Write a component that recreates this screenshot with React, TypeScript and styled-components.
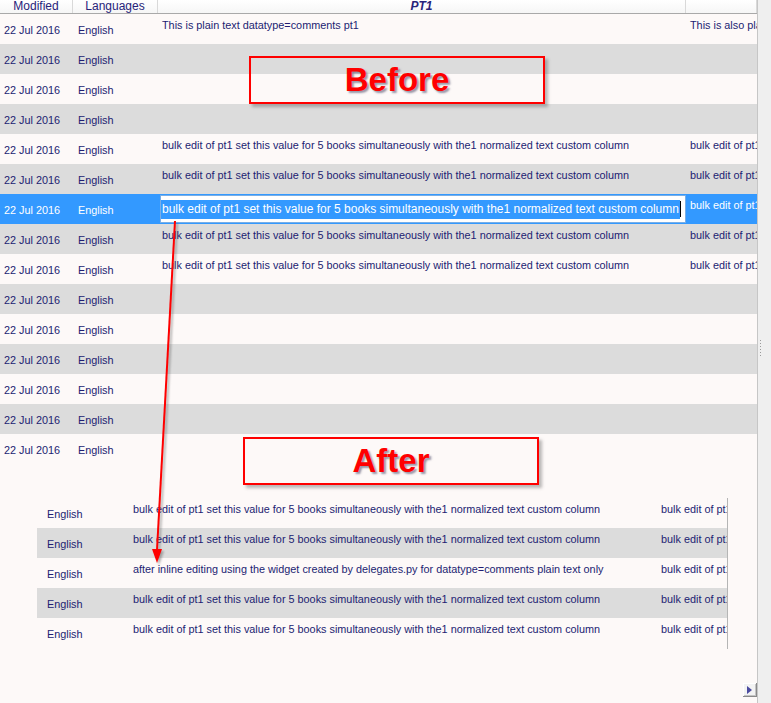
import React from 'react';
import styled, { createGlobalStyle } from 'styled-components';

const BULK = 'bulk edit of pt1 set this value for 5 books simultaneously with the1 normalized text custom column';
const EDITED = 'bulk edit of pt1 set this value for 5 books simultaneously with the1  normalized text custom column';
const NEXT = 'bulk edit of pt1 set this value for 5 books simultaneously';

interface Row {
  pt1?: string;
  next?: string;
  selected?: boolean;
}

const topRows: Row[] = [
  { pt1: 'This is plain text datatype=comments pt1', next: 'This is also plain text' },
  {}, {}, {},
  { pt1: BULK, next: NEXT },
  { pt1: BULK, next: NEXT },
  { pt1: EDITED, next: NEXT, selected: true },
  { pt1: BULK, next: NEXT },
  { pt1: BULK, next: NEXT },
  {}, {}, {}, {}, {}, {},
];

const bottomRows: string[] = [
  BULK,
  BULK,
  'after inline editing using the widget created by delegates.py for datatype=comments plain text only',
  BULK,
  BULK,
];

const GlobalStyle = createGlobalStyle`
  html, body {
    margin: 0;
    padding: 0;
    background: #fdf9f8;
    overflow: hidden;
  }
  * { box-sizing: border-box; }
`;

const App = () => (
  <>
    <GlobalStyle/>
    <Page>
      <Main>
        <Header>
          <HeadCell>Modified</HeadCell>
          <HeadCell>Languages</HeadCell>
          <HeadCell strong>PT1</HeadCell>
          <HeadCell/>
        </Header>
        {
          topRows.map((row, index) => (
            <TopRow key={ `top-${ index }` } shade={ index % 2 === 1 } selected={ !!row.selected }>
              <DateCell>22 Jul 2016</DateCell>
              <DateCell>English</DateCell>
              {
                row.selected
                  ? <EditCell><Editor><Selection>{ row.pt1 }</Selection><Caret/></Editor></EditCell>
                  : <TextCell>{ row.pt1 }</TextCell>
              }
              <TextCell>{ row.next }</TextCell>
            </TopRow>
          ))
        }
        <Lower>
          {
            bottomRows.map((text, index) => (
              <LowerRow key={ `low-${ index }` } shade={ index % 2 === 1 }>
                <LangCell>English</LangCell>
                <TextCell>{ text }</TextCell>
                <TextCell>{ NEXT }</TextCell>
              </LowerRow>
            ))
          }
        </Lower>

        <Label top={ 56 } left={ 249 }>Before</Label>
        <Label top={ 437 } left={ 243 }>After</Label>

        <Arrow viewBox="0 0 757 703" width="757" height="703">
          <defs>
            <filter id="soft" x="-50%" y="-10%" width="200%" height="120%">
              <feGaussianBlur stdDeviation="1.2"/>
            </filter>
          </defs>
          <g filter="url(#soft)" opacity="0.45">
            <line x1="177" y1="223" x2="159" y2="552" stroke="#555" strokeWidth="2"/>
            <polygon points="159,565 154,551 164,551" fill="#555"/>
          </g>
          <line x1="175" y1="221" x2="157" y2="550" stroke="#ff0000" strokeWidth="2"/>
          <polygon points="157,563 152,549 162,549" fill="#ff0000"/>
        </Arrow>

        <Corner>
          <svg width="6" height="8" viewBox="0 0 6 8"><polygon points="0,0 5,4 0,8" fill="#4b4ba0"/></svg>
        </Corner>
      </Main>
      <Strip>
        <Grip>
          { [0, 1, 2, 3, 4, 5].map(i => <Dot key={ i }/>) }
        </Grip>
      </Strip>
    </Page>
  </>
);

export default App;

const Page = styled.div`
  display: flex;
  width: 771px;
  height: 703px;
  font-family: "Liberation Sans", Arial, sans-serif;
  color: #221d72;
`;

const Main = styled.div`
  position: relative;
  width: 757px;
  height: 703px;
  display: flex;
  flex-direction: column;
  background: #fdf9f8;
  overflow: hidden;
`;

const Header = styled.div`
  display: grid;
  grid-template-columns: 73px 85px 528px 71px;
  height: 14px;
  background: linear-gradient(#ffffff, #f6f6f6);
  border-bottom: 1px solid #a9a9a9;
`;

const HeadCell = styled.div<{ strong?: boolean }>`
  border-right: 1px solid #d9d9d9;
  text-align: center;
  font-size: 12px;
  line-height: 11px;
  padding-top: 1px;
  overflow: hidden;
  white-space: nowrap;
  color: #27237a;
  font-weight: ${ ({ strong }) => strong ? 'bold' : 'normal' };
  font-style: ${ ({ strong }) => strong ? 'italic' : 'normal' };
`;

const TopRow = styled.div<{ shade: boolean, selected: boolean }>`
  display: grid;
  grid-template-columns: 73px 85px 528px 71px;
  height: 30px;
  font-size: 10.85px;
  line-height: 13px;
  background: ${ ({ shade, selected }) => selected ? '#3399ff' : shade ? '#dcdcdc' : '#fdf9f8' };
  color: ${ ({ selected }) => selected ? '#ffffff' : '#221d72' };

  & > div:nth-child(1) { padding-left: 4px; }
  & > div:nth-child(2) { padding-left: 5px; }
`;

const DateCell = styled.div`
  padding-top: 10px;
  white-space: nowrap;
  overflow: hidden;
`;

const TextCell = styled.div`
  padding: 5px 0 0 4px;
  white-space: nowrap;
  overflow: hidden;
`;

const EditCell = styled.div`
  padding: 1px 0 1px 2px;
`;

const Editor = styled.div`
  display: flex;
  align-items: center;
  height: 28px;
  background: #ffffff;
  border: 1px solid #79aee6;
  font-size: 12px;
  overflow: hidden;
  white-space: nowrap;
`;

const Selection = styled.span`
  background: #3399ff;
  color: #ffffff;
  line-height: 19px;
  padding: 0 1px;
`;

const Caret = styled.span`
  display: inline-block;
  width: 1px;
  height: 16px;
  background: #000000;
`;

const Lower = styled.div`
  display: flex;
  flex-direction: column;
  width: 691px;
  margin: 34px 0 0 37px;
  border-right: 1px solid #b5b5b5;
  padding-bottom: 1px;
`;

const LowerRow = styled.div<{ shade: boolean }>`
  display: grid;
  grid-template-columns: 92px 528px 70px;
  height: 30px;
  font-size: 10.85px;
  line-height: 13px;
  background: ${ ({ shade }) => shade ? '#dcdcdc' : '#fdf9f8' };
`;

const LangCell = styled.div`
  padding: 10px 0 0 10px;
  white-space: nowrap;
`;

const Label = styled.div<{ top: number, left: number }>`
  position: absolute;
  top: ${ ({ top }) => top }px;
  left: ${ ({ left }) => left }px;
  width: 296px;
  height: 48px;
  display: flex;
  align-items: center;
  justify-content: center;
  border: 2px solid #ff0000;
  box-shadow: 3px 3px 3px rgba(60, 60, 60, 0.35);
  color: #ff0000;
  font-family: "Liberation Sans", Arial, sans-serif;
  font-weight: bold;
  font-size: 33px;
  text-shadow: 2px 2px 2px rgba(70, 70, 100, 0.55);
`;

const Arrow = styled.svg`
  position: absolute;
  top: 0;
  left: 0;
  pointer-events: none;
`;

const Corner = styled.div`
  position: absolute;
  left: 743px;
  top: 683px;
  width: 14px;
  height: 14px;
  display: flex;
  align-items: center;
  justify-content: center;
  background: #f3f3f3;
  border-right: 1px solid #8a8a8a;
  border-bottom: 1px solid #8a8a8a;
  box-shadow: inset 1px 1px 0 #ffffff, inset -1px -1px 0 #c4c4c4;
`;

const Strip = styled.div`
  flex: 1;
  background: #efefef;
  border-left: 1px solid #c6c6c6;
  padding: 340px 0 0 2px;
`;

const Grip = styled.div`
  display: flex;
  flex-direction: column;
  gap: 2px;
`;

const Dot = styled.div`
  width: 1px;
  height: 1px;
  background: #9a9a9a;
`;
